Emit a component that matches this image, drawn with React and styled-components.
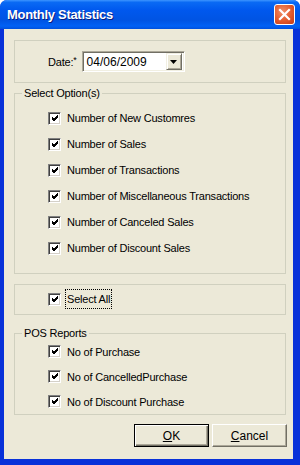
import React from 'react'
import styled, { createGlobalStyle } from 'styled-components'

const GlobalStyle = createGlobalStyle`
  html, body {
    margin: 0;
    padding: 0;
    background: #ffffff;
  }
  body {
    font-family: "Liberation Sans", Arial, sans-serif;
    font-size: 11px;
    letter-spacing: -0.2px;
    color: #000000;
  }
`

const options = [
  'Number of New Customres',
  'Number of Sales',
  'Number of Transactions',
  'Number of Miscellaneous Transactions',
  'Number of Canceled Sales',
  'Number of Discount Sales',
]

const posReports = [
  'No of Purchase',
  'No of CancelledPurchase',
  'No of Discount Purchase',
]

function CheckBox() {
  return (
    <Box>
      <svg width="9" height="9" viewBox="0 0 9 9">
        <path d="M1 3 L3 5 L7 1 M1 4 L3 6 L7 2 M1 5 L3 7 L7 3" stroke="#000" strokeWidth="1" fill="none" shapeRendering="crispEdges" />
      </svg>
    </Box>
  )
}

export default function App() {
  return (
    <>
      <GlobalStyle />
      <Window>
        <TitleBar>
          <Title>Monthly Statistics</Title>
          <CloseButton>
            <svg width="13" height="13" viewBox="0 0 13 13">
              <path d="M2 2 L11 11 M11 2 L2 11" stroke="#fff" strokeWidth="2.2" strokeLinecap="square" />
            </svg>
          </CloseButton>
        </TitleBar>
        <Client>
          <DateBox>
            <DateLabel>Date:<sup>*</sup></DateLabel>
            <Combo>
              <ComboText>04/06/2009</ComboText>
              <DropButton>
                <svg width="7" height="4" viewBox="0 0 7 4">
                  <path d="M0 0 H7 L3.5 4 Z" fill="#000" />
                </svg>
              </DropButton>
            </Combo>
          </DateBox>

          <Group>
            <Legend>Select Option(s)</Legend>
            <List $top={6} $bottom={12}>
              {options.map(label => (
                <Row key={label} $height={26}>
                  <CheckBox />
                  <RowLabel>{label}</RowLabel>
                </Row>
              ))}
            </List>
          </Group>

          <SelectAllBox>
            <CheckBox />
            <FocusLabel>Select All</FocusLabel>
          </SelectAllBox>

          <Group $gap={12}>
            <Legend>POS Reports</Legend>
            <List $top={0} $bottom={0}>
              {posReports.map(label => (
                <Row key={label} $height={25}>
                  <CheckBox />
                  <RowLabel>{label}</RowLabel>
                </Row>
              ))}
            </List>
          </Group>

          <ButtonRow>
            <Button $default><u>O</u>K</Button>
            <Button><u>C</u>ancel</Button>
          </ButtonRow>
        </Client>
      </Window>
    </>
  )
}

const Window = styled.div`
  width: 300px;
  height: 465px;
  display: flex;
  flex-direction: column;
  background: #0831d9;
  border-radius: 7px 7px 0 0;
  overflow: hidden;
  box-sizing: border-box;
`

const TitleBar = styled.div`
  height: 29px;
  flex: none;
  display: flex;
  align-items: center;
  padding: 0 5px 0 7px;
  background: linear-gradient(
    #3d95ff 0%,
    #0a6af4 8%,
    #0058ee 35%,
    #0054e3 70%,
    #0161f5 90%,
    #0050dc 100%
  );
`

const Title = styled.div`
  font-family: "Liberation Sans", Arial, sans-serif;
  font-weight: bold;
  font-size: 13px;
  letter-spacing: -0.3px;
  color: #ffffff;
  text-shadow: 1px 1px #0a1e80;
`

const CloseButton = styled.div`
  margin-left: auto;
  width: 21px;
  height: 21px;
  box-sizing: border-box;
  border: 1px solid #ffffff;
  border-radius: 3px;
  background: radial-gradient(circle at 40% 35%, #f0906a 0%, #e35a2c 55%, #c43a16 100%);
  display: flex;
  align-items: center;
  justify-content: center;
`

const Client = styled.div`
  flex: 1;
  margin: 0 7px 6px 4px;
  background: #ece9d8;
  padding: 11px 7px 0 10px;
  display: flex;
  flex-direction: column;
`

const DateBox = styled.div`
  height: 43px;
  box-sizing: border-box;
  border: 1px solid #d0d0bf;
  display: flex;
  align-items: center;
  padding-left: 33px;
  gap: 5px;
`

const DateLabel = styled.span`
  sup {
    font-size: 9px;
    vertical-align: 3px;
    line-height: 0;
  }
`

const Combo = styled.div`
  width: 103px;
  height: 21px;
  box-sizing: border-box;
  border: 1px solid;
  border-color: #aca899 #ffffff #ffffff #aca899;
  box-shadow: inset 1px 1px #716f64, inset -1px -1px #f1efe2;
  background: #ffffff;
  display: flex;
  align-items: center;
  padding: 2px;
`

const ComboText = styled.span`
  flex: 1;
  padding-left: 2px;
  font-size: 12px;
  letter-spacing: 0;
`

const DropButton = styled.div`
  width: 16px;
  height: 17px;
  box-sizing: border-box;
  background: #ece9d8;
  border: 1px solid;
  border-color: #f1efe2 #716f64 #716f64 #f1efe2;
  box-shadow: inset 1px 1px #ffffff, inset -1px -1px #aca899;
  display: flex;
  align-items: center;
  justify-content: center;
`

const Group = styled.fieldset`
  margin: ${p => p.$gap ?? 4}px 0 0 0;
  padding: 0;
  border: 1px solid #d0d0bf;
  min-width: 0;
`

const Legend = styled.legend`
  margin-left: 7px;
  padding: 0 2px;
  line-height: 12px;
  font-size: 11px;
  color: #000;
`

const List = styled.div`
  display: flex;
  flex-direction: column;
  padding: ${p => p.$top}px 0 ${p => p.$bottom}px 33px;
`

const Row = styled.div`
  height: ${p => p.$height}px;
  display: flex;
  align-items: center;
  gap: 6px;
`

const Box = styled.span`
  width: 13px;
  height: 13px;
  flex: none;
  box-sizing: border-box;
  border: 1px solid;
  border-color: #808080 #ffffff #ffffff #808080;
  box-shadow: inset 1px 1px #404040, inset -1px -1px #d4d0c8;
  background: #ffffff;
  display: flex;
  align-items: center;
  justify-content: center;
  svg {
    margin-left: 1px;
  }
`

const RowLabel = styled.span`
  white-space: nowrap;
`

const SelectAllBox = styled.div`
  margin-top: 10px;
  height: 31px;
  box-sizing: border-box;
  border: 1px solid #d0d0bf;
  display: flex;
  align-items: center;
  padding: 0 0 1px 33px;
  gap: 5px;
`

const FocusLabel = styled.span`
  outline: 1px dotted #000;
  padding: 3px 1px;
`

const ButtonRow = styled.div`
  margin-top: 9px;
  margin-right: -1px;
  display: flex;
  justify-content: flex-end;
  gap: 3px;
`

const Button = styled.div`
  width: 75px;
  height: 23px;
  box-sizing: border-box;
  display: flex;
  align-items: center;
  justify-content: center;
  background: #ece9d8;
  border: 1px solid;
  border-color: ${p => (p.$default ? '#000' : '#ffffff #716f64 #716f64 #ffffff')};
  box-shadow: ${p => (p.$default
    ? 'inset 1px 1px #ffffff, inset -1px -1px #716f64, inset -2px -2px #aca899'
    : 'inset -1px -1px #aca899')};
  font-size: 12px;
  letter-spacing: 0;
`
